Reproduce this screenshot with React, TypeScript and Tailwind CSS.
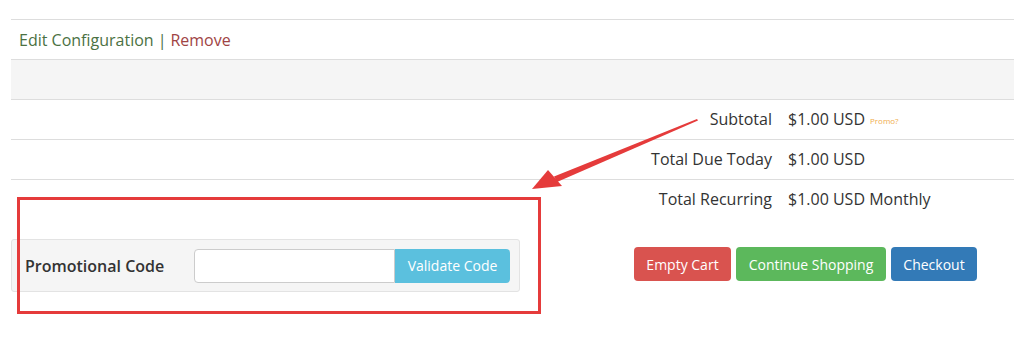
import React from "react";

const rows = [
  { label: "Subtotal", value: "$1.00 USD", promo: true },
  { label: "Total Due Today", value: "$1.00 USD" },
  { label: "Total Recurring", value: "$1.00 USD Monthly" },
];

export default function App() {
  return (
    <div
      className="relative w-[1014px] h-[344px] bg-white text-[#333] overflow-hidden"
      style={{ fontFamily: '"Open Sans", "Noto Sans", sans-serif' }}
    >
      <div className="pl-[11px] pt-[19px]">
        {/* Item actions */}
        <div className="h-[40px] border-t border-[#ddd] flex items-center pl-[8px] text-[16px]">
          <a className="text-[#4b7143]">Edit Configuration</a>
          <span className="mx-[4px] text-[#4b7143]">|</span>
          <a className="text-[#a04444]">Remove</a>
        </div>

        {/* Grey band */}
        <div className="h-[40px] border-t border-[#ddd] bg-[#f5f5f5]" />

        {/* Totals */}
        {rows.map((r) => (
          <div
            key={r.label}
            className="h-[40px] border-t border-[#ddd] flex items-center text-[16px] pb-[1px]"
          >
            <div className="w-[761px] text-right">{r.label}</div>
            <div className="pl-[16px] flex items-center">
              {r.value}
              {r.promo && (
                <span className="ml-[5px] text-[8px] text-[#f0ad4e] mt-[3px]">Promo?</span>
              )}
            </div>
          </div>
        ))}

        {/* Promo + buttons */}
        <div className="flex items-start mt-[20px]">
          <div className="w-[509px] h-[53px] bg-[#f5f5f5] border border-[#e3e3e3] rounded-[3px] flex items-center pl-[13px] pr-[9px]">
            <span className="font-semibold text-[16px] w-[169px]">Promotional Code</span>
            <div className="flex h-[34px]">
              <input
                className="w-[201px] h-[34px] bg-white border border-[#ccc] rounded-l-[4px] outline-none"
                type="text"
              />
              <button className="h-[34px] w-[115px] bg-[#5bc0de] text-white text-[14px] rounded-r-[4px]">
                Validate Code
              </button>
            </div>
          </div>
          <div className="ml-[114px] mt-[8px] flex gap-[5px] text-[14px] text-white">
            <button className="h-[34px] w-[97px] rounded-[4px] bg-[#d9534f]">Empty Cart</button>
            <button className="h-[34px] w-[150px] rounded-[4px] bg-[#5cb85c]">Continue Shopping</button>
            <button className="h-[34px] w-[86px] rounded-[4px] bg-[#337ab7]">Checkout</button>
          </div>
        </div>
      </div>

      {/* Annotation: rectangle */}
      <div className="absolute left-[17px] top-[197px] w-[524px] h-[117px] border-[3px] border-[#e53b3b]" />

      {/* Annotation: arrow */}
      <svg className="absolute left-0 top-0" width="1014" height="344" viewBox="0 0 1014 344">
        <polygon points="697,119 698,120.5 557,182 554,176.5" fill="#e53b3b" />
        <polygon points="532,189 548,170 562,186" fill="#e53b3b" />
      </svg>
    </div>
  );
}
